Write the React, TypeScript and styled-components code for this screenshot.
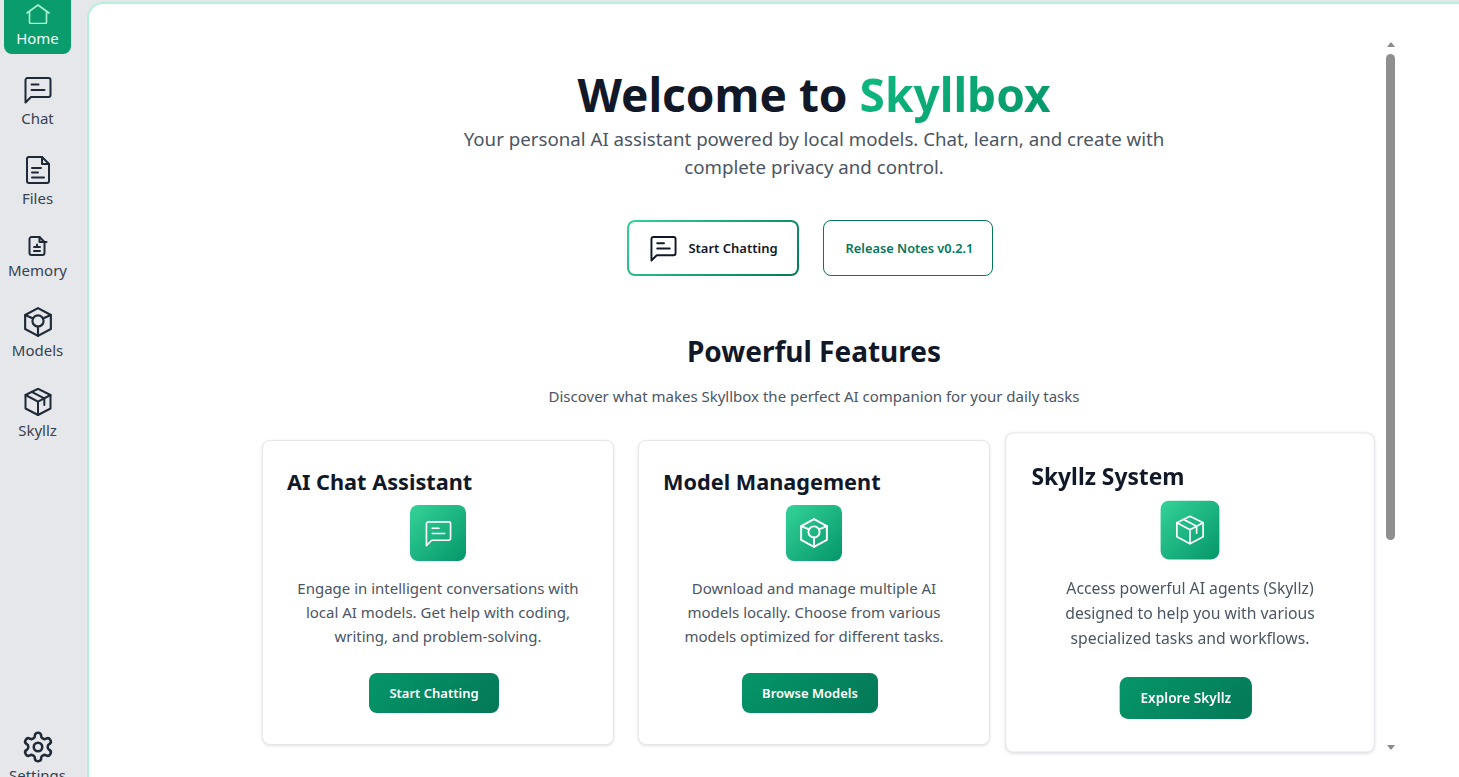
import React from 'react';
import styled, { createGlobalStyle } from 'styled-components';
import { LuSettings } from 'react-icons/lu';

const GlobalStyle = createGlobalStyle`
  html, body, #root {
    margin: 0;
    height: 100%;
    overflow: hidden;
  }
  body {
    font-family: "Noto Sans", "Open Sans", sans-serif;
    background: #ffffff;
  }
`;

type IconProps = { size?: number; stroke?: number; className?: string };

const HomeIcon = ({ size = 28 }: IconProps) => (
  <svg width={size} height={size} viewBox="0 0 28 28" fill="none" stroke="currentColor" strokeWidth="1.6" strokeLinecap="round" strokeLinejoin="round">
    <path d="M3 17 14 9l11 8" />
    <path d="M5.5 15.5V26a1.5 1.5 0 0 0 1.5 1.5h14a1.5 1.5 0 0 0 1.5-1.5V15.5" />
  </svg>
);

const ChatIcon = ({ size = 28, stroke = 2 }: IconProps) => (
  <svg width={size} height={size} viewBox="0 0 28 28" fill="none" stroke="currentColor" strokeWidth={stroke} strokeLinecap="round" strokeLinejoin="round">
    <path d="M1.5 26.5V4a2 2 0 0 1 2-2h21a2 2 0 0 1 2 2v15a2 2 0 0 1-2 2H7z" />
    <path d="M7.5 8.5h7M7.5 14h13" />
  </svg>
);

const FileIcon = ({ size = 28 }: IconProps) => (
  <svg width={size} height={size} viewBox="0 0 28 28" fill="none" stroke="currentColor" strokeWidth="2" strokeLinecap="round" strokeLinejoin="round">
    <path d="M5 1h13l7 7v17a2 2 0 0 1-2 2H5a2 2 0 0 1-2-2V3a2 2 0 0 1 2-2z" />
    <path d="M18 1v7h7" />
    <path d="M8 12h9M8 16.5h6M8 21.5h12" />
  </svg>
);

const MemoryIcon = ({ size = 20 }: IconProps) => (
  <svg width={size} height={size} viewBox="0 0 20 20" fill="none" stroke="currentColor" strokeWidth="2" strokeLinecap="round" strokeLinejoin="round">
    <path d="M3.5 1h8l5 5v11a2 2 0 0 1-2 2h-11a2 2 0 0 1-2-2V3a2 2 0 0 1 2-2z" />
    <path d="M11.5 1v5h7" />
    <path d="M6 11h6M6 15h6M9 8.5v2" />
  </svg>
);

const ModelIcon = ({ size = 30, stroke = 2, className }: IconProps) => (
  <svg className={className} width={size} height={size} viewBox="0 0 28 28" fill="none" stroke="currentColor" strokeWidth={stroke} strokeLinecap="round" strokeLinejoin="round">
    <path d="M14 1 26 7.5v13L14 27 2 20.5v-13z" />
    <circle cx="14" cy="13" r="5.2" />
    <path d="M14 18.2V27M2 7.5l7.4 3.2M26 7.5l-7.4 3.2" />
  </svg>
);

const BoxIcon = ({ size = 28, stroke = 2 }: IconProps) => (
  <svg width={size} height={size} viewBox="0 0 28 28" fill="none" stroke="currentColor" strokeWidth={stroke} strokeLinecap="round" strokeLinejoin="round">
    <path d="M14 0.8 26.5 7v13.5L14 27 1.5 20.5V7z" />
    <path d="M1.5 7 14 13.7 26.5 7M14 13.7V27" />
    <path d="M7.7 3.8 20.3 10.4v6.6" />
  </svg>
);

const NavModelIcon = styled(ModelIcon)`
  margin: -1px;
`;

const GearIcon = styled(LuSettings)`
  margin: -3px;
`;

type NavEntry = { label: string; icon: React.ReactNode; active?: boolean };

const navItems: NavEntry[] = [
  { label: 'Home', icon: <HomeIcon />, active: true },
  { label: 'Chat', icon: <ChatIcon /> },
  { label: 'Files', icon: <FileIcon /> },
  { label: 'Memory', icon: <MemoryIcon /> },
  { label: 'Models', icon: <NavModelIcon /> },
  { label: 'Skyllz', icon: <BoxIcon /> },
];

type Feature = { title: string; icon: React.ReactNode; text: string[]; action: string; hovered?: boolean };

const features: Feature[] = [
  {
    title: 'AI Chat Assistant',
    icon: <ChatIcon size={27} stroke={1.7} />,
    text: ['Engage in intelligent conversations with', 'local AI models. Get help with coding,', 'writing, and problem-solving.'],
    action: 'Start Chatting',
  },
  {
    title: 'Model Management',
    icon: <ModelIcon stroke={1.8} />,
    text: ['Download and manage multiple AI', 'models locally. Choose from various', 'models optimized for different tasks.'],
    action: 'Browse Models',
  },
  {
    title: 'Skyllz System',
    icon: <BoxIcon stroke={1.6} />,
    text: ['Access powerful AI agents (Skyllz)', 'designed to help you with various', 'specialized tasks and workflows.'],
    action: 'Explore Skyllz',
    hovered: true,
  },
];

export default function App() {
  return (
    <>
      <GlobalStyle />
      <Shell>
        <Sidebar>
          <NavList>
            {navItems.map((item) => (
              <NavItem key={item.label} $active={item.active}>
                {item.icon}
                <NavLabel $active={item.active}>{item.label}</NavLabel>
              </NavItem>
            ))}
          </NavList>
          <NavItem>
            <GearIcon size={34} strokeWidth={1.8} />
            <NavLabel>Settings</NavLabel>
          </NavItem>
        </Sidebar>

        <Panel>
          <Content>
            <Hero>
              <Title>
                Welcome to <Brand>Skyllbox</Brand>
              </Title>
              <Lead>
                Your personal AI assistant powered by local models. Chat, learn, and create with complete privacy and control.
              </Lead>
              <HeroActions>
                <PrimaryOutline>
                  <ButtonFace>
                    <ChatIcon size={27} />
                    Start Chatting
                  </ButtonFace>
                </PrimaryOutline>
                <GhostButton>Release Notes v0.2.1</GhostButton>
              </HeroActions>
            </Hero>

            <SectionTitle>Powerful Features</SectionTitle>
            <SectionLead>Discover what makes Skyllbox the perfect AI companion for your daily tasks</SectionLead>

            <CardGrid>
              {features.map((f) => (
                <Card key={f.title} $hovered={f.hovered}>
                  <CardTitle>{f.title}</CardTitle>
                  <CardIcon>{f.icon}</CardIcon>
                  <CardText>
                    {f.text.map((line) => (
                      <span key={line}>{line}</span>
                    ))}
                  </CardText>
                  <CardButton>{f.action}</CardButton>
                </Card>
              ))}
            </CardGrid>
          </Content>

          <Scrollbar>
            <ArrowUp />
            <Thumb />
            <ArrowDown />
          </Scrollbar>
        </Panel>
      </Shell>
    </>
  );
}

const Shell = styled.div`
  display: flex;
  height: 777px;
  overflow: hidden;
  background: #e5e7eb;
`;

const Sidebar = styled.nav`
  width: 87px;
  flex-shrink: 0;
  display: flex;
  flex-direction: column;
  height: 799px;
  margin-top: -8px;
  box-sizing: border-box;
  padding-left: 4px;
  background: #e5e7eb;
`;

const NavList = styled.div`
  display: flex;
  flex-direction: column;
  gap: 18px;
  flex: 1;
`;

const NavItem = styled.div<{ $active?: boolean }>`
  width: 67px;
  box-sizing: border-box;
  display: flex;
  flex-direction: column;
  align-items: center;
  justify-content: flex-end;
  gap: 2px;
  padding: 4px 0;
  border-radius: 8px;
  color: ${(p) => (p.$active ? '#a7f3d0' : '#1f2937')};
  background: ${(p) => (p.$active ? '#0b9c6d' : 'transparent')};
  svg {
    flex-shrink: 0;
  }
`;

const NavLabel = styled.span<{ $active?: boolean }>`
  font-size: 15px;
  line-height: 24px;
  color: ${(p) => (p.$active ? '#f0fdf8' : '#374151')};
  white-space: nowrap;
`;

const Panel = styled.main`
  flex: 1;
  min-width: 0;
  display: flex;
  margin-top: 2px;
  padding-left: 143px;
  background: #ffffff;
  border-top: 2px solid #b4efd9;
  border-left: 2px solid #b4efd9;
  border-top-left-radius: 16px;
  overflow: hidden;
`;

const Content = styled.div`
  width: 1153px;
  flex-shrink: 0;
  padding: 0 0 0 30px;
  box-sizing: border-box;
`;

const Hero = styled.section`
  display: flex;
  flex-direction: column;
  align-items: center;
  padding-top: 59px;
  width: 1104px;
`;

const Title = styled.h1`
  margin: 0;
  font-size: 46px;
  line-height: 62px;
  font-weight: 700;
  color: #111827;
`;

const Brand = styled.span`
  background: linear-gradient(135deg, #10b981, #059669);
  -webkit-background-clip: text;
  background-clip: text;
  color: transparent;
`;

const Lead = styled.p`
  margin: 0;
  max-width: 768px;
  font-size: 18.7px;
  line-height: 28px;
  color: #4b5563;
  text-align: center;
`;

const HeroActions = styled.div`
  display: flex;
  gap: 24px;
  margin: 39px 8px 0 0;
`;

const PrimaryOutline = styled.button`
  width: 172px;
  height: 56px;
  padding: 2px;
  border: 0;
  border-radius: 8px;
  background: linear-gradient(135deg, #34d399, #047857);
  font: inherit;
`;

const ButtonFace = styled.span`
  height: 100%;
  display: flex;
  align-items: center;
  justify-content: center;
  gap: 11px;
  padding-left: 2px;
  border-radius: 6px;
  background: #ffffff;
  color: #111827;
  font-size: 13px;
  font-weight: 600;
`;

const GhostButton = styled.button`
  width: 170px;
  height: 56px;
  padding: 0 0 0 3px;
  border: 1px solid #047857;
  border-radius: 8px;
  background: #ffffff;
  color: #047857;
  font: inherit;
  font-size: 12.8px;
  font-weight: 600;
`;

const SectionTitle = styled.h2`
  width: 1104px;
  margin: 53px 0 0;
  text-align: center;
  font-size: 28px;
  line-height: 45px;
  font-weight: 700;
  color: #111827;
`;

const SectionLead = styled.p`
  width: 1104px;
  margin: 10px 0 0;
  text-align: center;
  font-size: 15px;
  line-height: 24px;
  color: #4b5563;
`;

const CardGrid = styled.div`
  width: 1104px;
  display: grid;
  grid-template-columns: repeat(3, 1fr);
  gap: 24px;
  margin-top: 32px;
`;

const Card = styled.article<{ $hovered?: boolean }>`
  height: 305px;
  box-sizing: border-box;
  padding: 25px 24px 24px;
  display: flex;
  flex-direction: column;
  align-items: center;
  background: #ffffff;
  border: 1px solid #e5e7eb;
  border-radius: 8px;
  box-shadow: 0 1px 3px rgba(0, 0, 0, 0.12);
  transform: ${(p) => (p.$hovered ? 'scale(1.05)' : 'none')};
`;

const CardTitle = styled.h3`
  align-self: flex-start;
  margin: 0;
  font-size: 21.7px;
  line-height: 32px;
  font-weight: 700;
  color: #111827;
`;

const CardIcon = styled.div`
  width: 56px;
  height: 56px;
  margin-top: 7px;
  display: flex;
  align-items: center;
  justify-content: center;
  border-radius: 8px;
  color: #ffffff;
  background: linear-gradient(135deg, #34d399, #059669);
`;

const CardText = styled.p`
  margin: 15px 0 0;
  display: flex;
  flex-direction: column;
  align-items: center;
  font-size: 15px;
  line-height: 24px;
  color: #4b5563;
  white-space: nowrap;
`;

const CardButton = styled.button`
  height: 40px;
  margin: 25px 8px 0 0;
  padding: 0 20px;
  border: 0;
  border-radius: 8px;
  background: linear-gradient(135deg, #059669, #047857);
  color: #ffffff;
  font: inherit;
  font-size: 13px;
  font-weight: 600;
`;

const Scrollbar = styled.div`
  position: absolute;
  top: 42px;
  left: 1386px;
  width: 9px;
  height: 708px;
  display: flex;
  flex-direction: column;
  align-items: center;
`;

const ArrowUp = styled.div`
  width: 0;
  height: 0;
  border-left: 4.5px solid transparent;
  border-right: 4.5px solid transparent;
  border-bottom: 5px solid #8a8a8a;
`;

const Thumb = styled.div`
  width: 9px;
  height: 486px;
  margin-top: 7px;
  border-radius: 5px;
  background: #8f8f8f;
`;

const ArrowDown = styled.div`
  width: 0;
  height: 0;
  margin-top: auto;
  border-left: 4.5px solid transparent;
  border-right: 4.5px solid transparent;
  border-top: 5px solid #8a8a8a;
`;
